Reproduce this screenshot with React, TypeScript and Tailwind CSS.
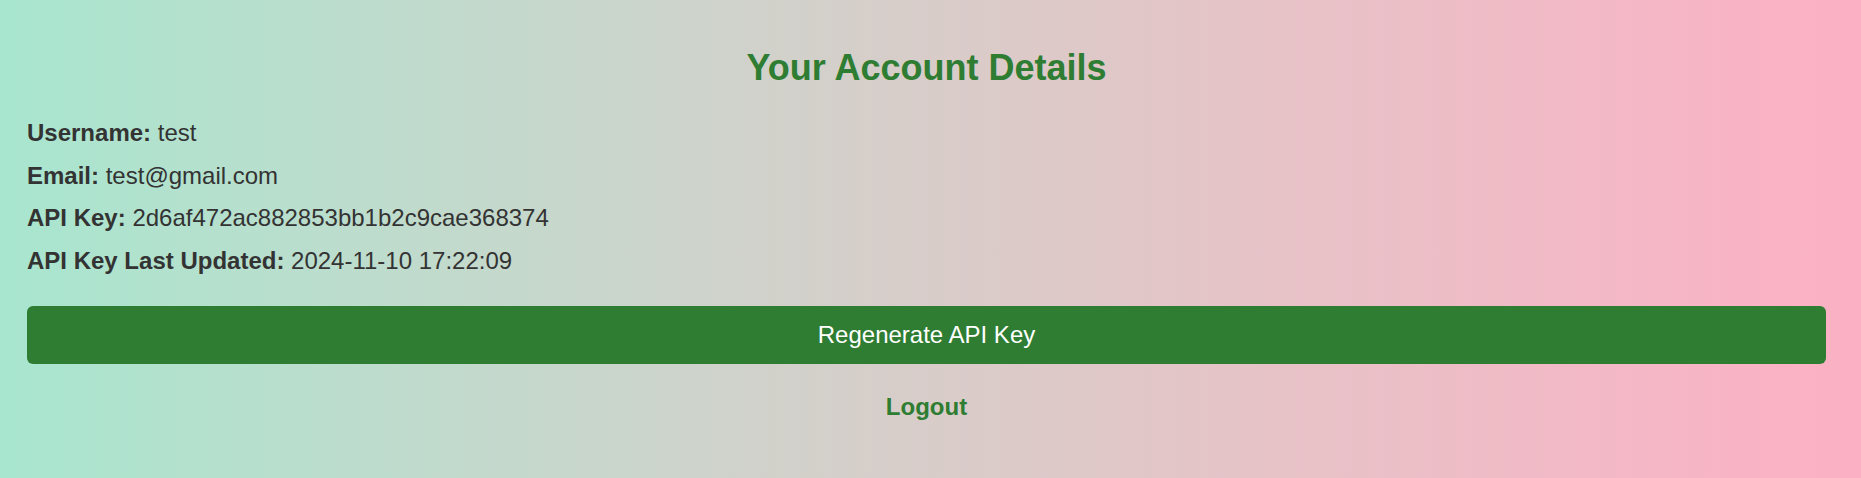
const details = [
    { label: "Username:", value: "test" },
    { label: "Email:", value: "test@gmail.com" },
    { label: "API Key:", value: "2d6af472ac882853bb1b2c9cae368374" },
    { label: "API Key Last Updated:", value: "2024-11-10 17:22:09" },
];

const App = () => {
    return (
        <div className="min-h-[478px] w-full bg-gradient-to-r from-[#a8e6cf] to-[#fcb0c4] font-['Liberation_Sans',Arial,sans-serif] text-[#333]">
            <div className="pl-[27px] pr-[35px] pt-[45px] pb-[50px]">
                <h2 className="text-center text-[36px] leading-[45px] font-bold text-[#2e7d32]">
                    Your Account Details
                </h2>
                <div className="mt-[27px] flex flex-col gap-[11.7px]">
                    {details.map(item => (
                        <p key={item.label} className="text-[24px] leading-[31px]">
                            <strong className="font-bold">{item.label}</strong> {item.value}
                        </p>
                    ))}
                </div>
                <button
                    type="button"
                    className="mt-[29.5px] w-full h-[58px] rounded-[6px] bg-[#2e7d32] text-white text-[24px]"
                >
                    Regenerate API Key
                </button>
                <div className="mt-[28px] text-center">
                    <a href="#" className="text-[24px] leading-[30px] font-bold text-[#2e7d32]">
                        Logout
                    </a>
                </div>
            </div>
        </div>
    );
}

export default App;
